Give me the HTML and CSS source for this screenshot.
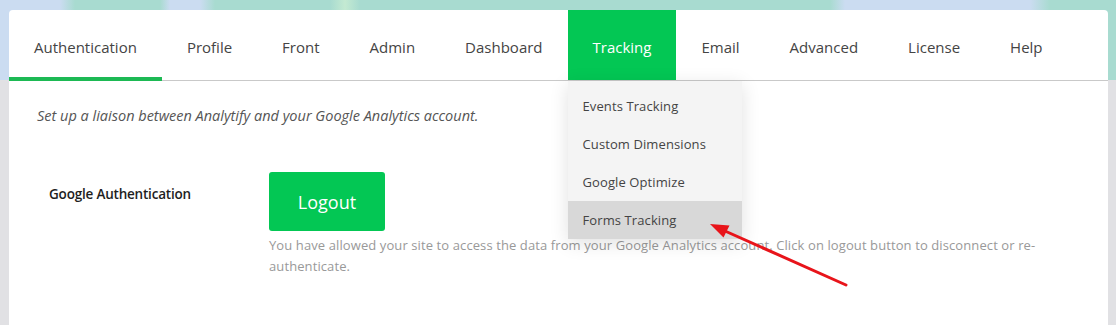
FILE: index.html
```html
<!DOCTYPE html>
<html lang="en">
<head>
    <meta charset="UTF-8">
    <title>Analytify Settings</title>
    <link rel="stylesheet" href="styles.css">
</head>
<body>
    <div class="page">
        <div class="card">
            <ul class="tabs">
                <li class="tab active">Authentication</li>
                <li class="tab">Profile</li>
                <li class="tab">Front</li>
                <li class="tab">Admin</li>
                <li class="tab">Dashboard</li>
                <li class="tab open">
                    Tracking
                    <ul class="dropdown">
                        <li>Events Tracking</li>
                        <li>Custom Dimensions</li>
                        <li>Google Optimize</li>
                        <li class="hover">Forms Tracking</li>
                    </ul>
                </li>
                <li class="tab">Email</li>
                <li class="tab">Advanced</li>
                <li class="tab">License</li>
                <li class="tab">Help</li>
            </ul>
            <div class="panel">
                <p class="intro">Set up a liaison between Analytify and your Google Analytics account.</p>
                <div class="row">
                    <div class="label">Google Authentication</div>
                    <div class="field">
                        <button class="logout">Logout</button>
                        <p class="help">You have allowed your site to access the data from your Google Analytics account. Click on logout button to disconnect or re-authenticate.</p>
                    </div>
                </div>
            </div>
            <svg class="arrow" viewBox="0 0 1099 315" width="1099" height="315">
                <line x1="716" y1="221" x2="837" y2="275" stroke="#e8141a" stroke-width="3" stroke-linecap="round"/>
                <polygon points="701,214 714.5,227.5 720.5,215.5" fill="#e8141a"/>
            </svg>
        </div>
    </div>
</body>
</html>
```

FILE: styles.css
```css
body {
    margin: 0;
    font-family: "Open Sans", "Liberation Sans", sans-serif;
    color: #444;
}
.page {
    height: 325px;
    overflow: hidden;
    padding: 10px 8px 0 9px;
    box-sizing: border-box;
    background:
        linear-gradient(to bottom, transparent 0, transparent 80px, #e1e1e4 80px),
        linear-gradient(to right, #cbdcf1 0, #cbdcf1 60px, #a8dbd0 75px, #a8dbd0 160px, #cbdcf1 170px, #cbdcf1 200px, #a8dbd0 215px, #a8dbd0 330px, #c4ead2 345px, #a8dbd0 360px, #a8dbd0 830px, #cbdcf1 845px, #cbdcf1 1030px, #a8dbd0 1050px);
}
.card {
    position: relative;
    background: #fff;
    border-radius: 4px 4px 0 0;
    height: 315px;
}
.tabs {
    display: flex;
    margin: 0;
    padding: 0;
    list-style: none;
    height: 70px;
    border-bottom: 1px solid #c9c9c9;
}
.tab {
    position: relative;
    display: flex;
    align-items: center;
    padding: 3px 25px 0;
    font-size: 15px;
    color: #444;
    cursor: pointer;
}
.tab.active::after {
    content: "";
    position: absolute;
    left: 0;
    bottom: -1px;
    width: 100%;
    height: 4px;
    background: #1db954;
}
.tab.open {
    background: #03c754;
    color: #fff;
}
.dropdown {
    position: absolute;
    top: 71px;
    left: 0;
    width: 174px;
    margin: 0;
    padding: 6px 0 0;
    list-style: none;
    background: #f4f4f4;
    box-shadow: 0 4px 18px rgba(0, 0, 0, 0.12);
    z-index: 2;
}
.dropdown li {
    height: 38px;
    line-height: 38px;
    padding-left: 15px;
    font-size: 13px;
    letter-spacing: 0.1px;
    color: #444;
}
.dropdown li.hover {
    background: #d8d8d8;
}
.panel {
    padding: 25px 28px 0;
}
.intro {
    margin: 0;
    font-size: 14.5px;
    line-height: 20px;
    font-style: italic;
    color: #555;
}
.row {
    display: flex;
    margin-top: 46px;
    padding-left: 12px;
}
.label {
    width: 220px;
    flex-shrink: 0;
    margin-top: 12px;
    font-size: 13.5px;
    line-height: 20px;
    font-weight: 600;
    color: #1e1e1e;
    letter-spacing: -0.2px;
}
.field {
    width: 790px;
}
.logout {
    width: 116px;
    height: 59px;
    border: none;
    border-radius: 3px;
    background: #03c754;
    color: #fff;
    font-family: "Open Sans", sans-serif;
    font-size: 18px;
    cursor: pointer;
}
.help {
    margin: 4px 0 0;
    font-size: 13px;
    line-height: 21px;
    color: #999;
    letter-spacing: 0.1px;
}
.arrow {
    position: absolute;
    left: 0;
    top: 0;
    pointer-events: none;
    z-index: 3;
}
```
